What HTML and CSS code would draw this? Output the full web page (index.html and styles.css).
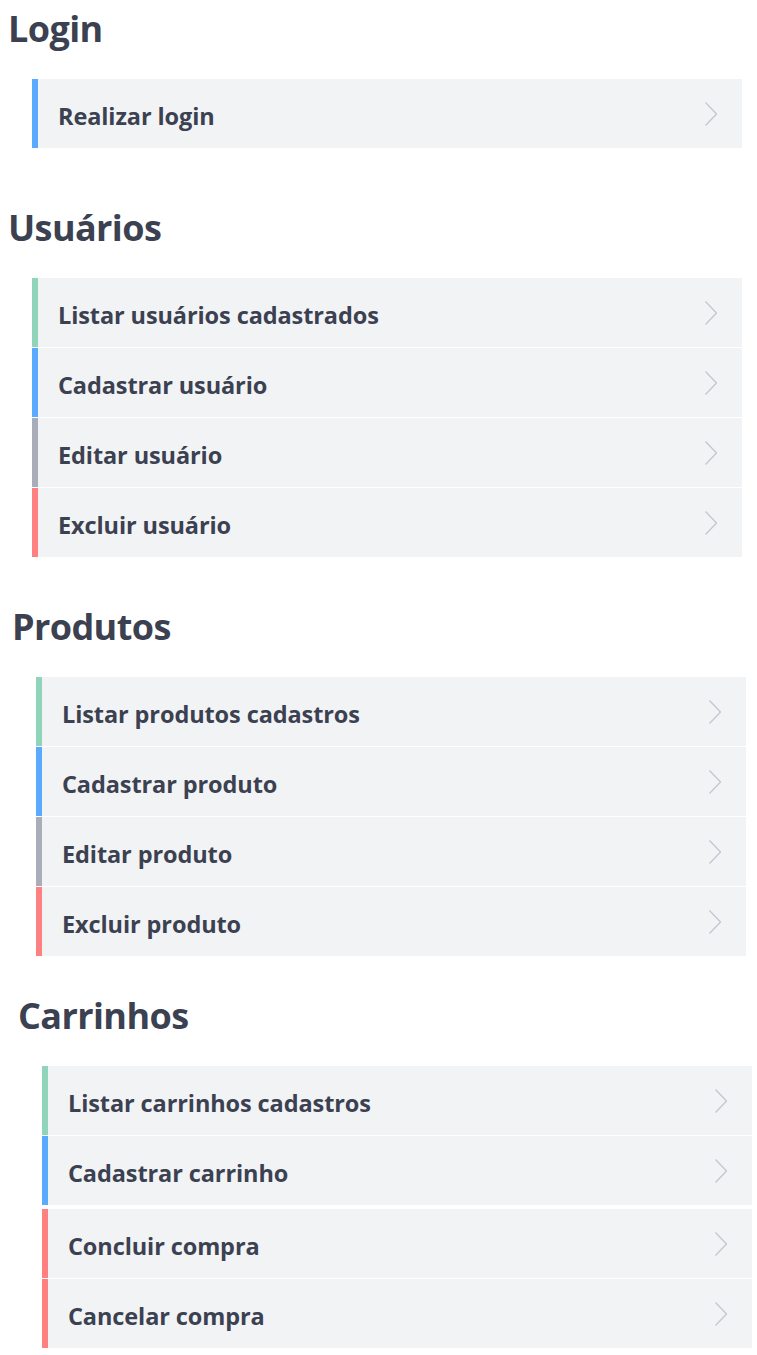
FILE: index.html
```html
<!DOCTYPE html>
<html lang="pt-BR">
<head>
<meta charset="utf-8">
<title>API</title>
<link rel="stylesheet" href="styles.css">
</head>
<body>
<main class="page">
  <section class="group group-login">
    <h2 class="group-title">Login</h2>
    <ul class="ops">
      <li class="op op-blue"><span class="op-label">Realizar login</span><svg class="chev" viewBox="0 0 12 24"><path d="M0.5 0.5 L11.5 12 L0.5 23.5"/></svg></li>
    </ul>
  </section>

  <section class="group group-users">
    <h2 class="group-title">Usuários</h2>
    <ul class="ops">
      <li class="op op-green"><span class="op-label">Listar usuários cadastrados</span><svg class="chev" viewBox="0 0 12 24"><path d="M0.5 0.5 L11.5 12 L0.5 23.5"/></svg></li>
      <li class="op op-blue"><span class="op-label">Cadastrar usuário</span><svg class="chev" viewBox="0 0 12 24"><path d="M0.5 0.5 L11.5 12 L0.5 23.5"/></svg></li>
      <li class="op op-gray"><span class="op-label">Editar usuário</span><svg class="chev" viewBox="0 0 12 24"><path d="M0.5 0.5 L11.5 12 L0.5 23.5"/></svg></li>
      <li class="op op-red"><span class="op-label">Excluir usuário</span><svg class="chev" viewBox="0 0 12 24"><path d="M0.5 0.5 L11.5 12 L0.5 23.5"/></svg></li>
    </ul>
  </section>

  <section class="group group-products">
    <h2 class="group-title">Produtos</h2>
    <ul class="ops">
      <li class="op op-green"><span class="op-label">Listar produtos cadastros</span><svg class="chev" viewBox="0 0 12 24"><path d="M0.5 0.5 L11.5 12 L0.5 23.5"/></svg></li>
      <li class="op op-blue"><span class="op-label">Cadastrar produto</span><svg class="chev" viewBox="0 0 12 24"><path d="M0.5 0.5 L11.5 12 L0.5 23.5"/></svg></li>
      <li class="op op-gray"><span class="op-label">Editar produto</span><svg class="chev" viewBox="0 0 12 24"><path d="M0.5 0.5 L11.5 12 L0.5 23.5"/></svg></li>
      <li class="op op-red"><span class="op-label">Excluir produto</span><svg class="chev" viewBox="0 0 12 24"><path d="M0.5 0.5 L11.5 12 L0.5 23.5"/></svg></li>
    </ul>
  </section>

  <section class="group group-carts">
    <h2 class="group-title">Carrinhos</h2>
    <ul class="ops">
      <li class="op op-green"><span class="op-label">Listar carrinhos cadastros</span><svg class="chev" viewBox="0 0 12 24"><path d="M0.5 0.5 L11.5 12 L0.5 23.5"/></svg></li>
      <li class="op op-blue op-spaced"><span class="op-label">Cadastrar carrinho</span><svg class="chev" viewBox="0 0 12 24"><path d="M0.5 0.5 L11.5 12 L0.5 23.5"/></svg></li>
      <li class="op op-red"><span class="op-label">Concluir compra</span><svg class="chev" viewBox="0 0 12 24"><path d="M0.5 0.5 L11.5 12 L0.5 23.5"/></svg></li>
      <li class="op op-red"><span class="op-label">Cancelar compra</span><svg class="chev" viewBox="0 0 12 24"><path d="M0.5 0.5 L11.5 12 L0.5 23.5"/></svg></li>
    </ul>
  </section>
</main>
</body>
</html>
```

FILE: styles.css
```css
* { box-sizing: border-box; }

html, body {
  margin: 0;
  padding: 0;
  background: #ffffff;
}

body {
  font-family: "Open Sans", "Noto Sans", "Liberation Sans", sans-serif;
  color: #3b4151;
}

.page {
  display: flex;
  flex-direction: column;
  width: 757px;
}

.group {
  display: flex;
  flex-direction: column;
}

.group-login { padding-left: 8px; padding-top: 4px; }
.group-users { padding-left: 8px; margin-top: 55px; }
.group-products { padding-left: 12px; margin-top: 45px; }
.group-carts { padding-left: 18px; margin-top: 35px; }

.group-title {
  margin: 0;
  font-size: 36px;
  line-height: 50px;
  font-weight: 700;
  letter-spacing: -0.6px;
}

.ops {
  list-style: none;
  margin: 25px 0 0 24px;
  padding: 0;
  width: 710px;
  display: flex;
  flex-direction: column;
  gap: 1px;
}

.op {
  display: flex;
  align-items: center;
  justify-content: space-between;
  height: 69px;
  padding: 0 25px 0 20px;
  background: #f2f3f5;
  border-left: 6px solid #5aaaff;
}

.op-spaced { margin-bottom: 3px; }

.op-blue { border-left-color: #5aaaff; }
.op-green { border-left-color: #90d5bb; }
.op-gray { border-left-color: #a8adb9; }
.op-red { border-left-color: #ff8080; }

.op-label {
  padding-top: 4px;
  font-size: 23.5px;
  font-weight: 700;
  letter-spacing: -0.1px;
}

.chev {
  width: 12px;
  height: 24px;
  flex: none;
}

.chev path {
  fill: none;
  stroke: #c4c7d1;
  stroke-width: 1.3;
}
```
